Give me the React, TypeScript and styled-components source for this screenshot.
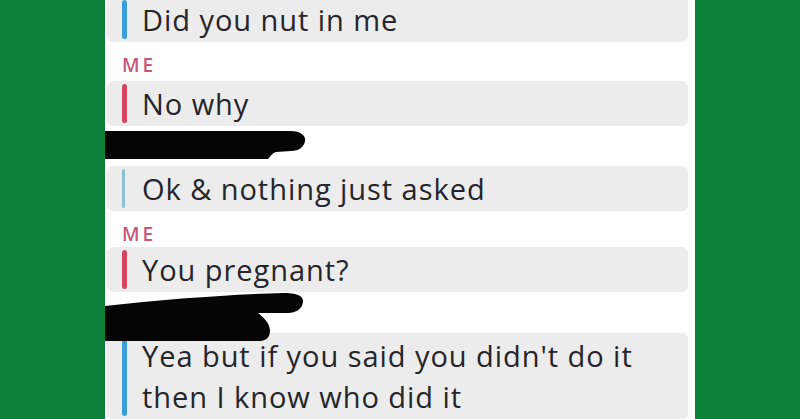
import styled, { createGlobalStyle } from "styled-components";

const GlobalStyle = createGlobalStyle`
  html, body {
    margin: 0;
    padding: 0;
    background: #0b8036;
  }
`;

interface Message {
  text: string[];
  bar: string;
  thin?: boolean;
}

const Page = styled.div`
  display: flex;
  height: 419px;
  overflow: hidden;
  background: #0b8036;
`;

const Side = styled.div<{ $w: number }>`
  width: ${(p) => p.$w}px;
  flex-shrink: 0;
`;

const Screen = styled.div`
  width: 590px;
  flex-shrink: 0;
  background: #ffffff;
  display: flex;
  flex-direction: column;
  padding: 0 7px 0 2px;
  box-sizing: border-box;
  margin-top: -3px;
  font-family: "Open Sans", "Noto Sans", sans-serif;
`;

const Bubble = styled.div`
  display: flex;
  align-items: stretch;
  background: #ececec;
  border-radius: 6px;
  padding: 2px 0 2px 15px;
`;

const Bar = styled.div<{ $color: string; $thin?: boolean }>`
  width: ${(p) => (p.$thin ? 3 : 5)}px;
  margin: 1px ${(p) => (p.$thin ? 17 : 15)}px 1px 0;
  border-radius: 3px;
  background: ${(p) => p.$color};
  flex-shrink: 0;
`;

const Text = styled.div`
  font-size: 29px;
  font-weight: 500;
  letter-spacing: 0.95px;
  line-height: 41px;
  color: #25252b;
  white-space: nowrap;
`;

const Label = styled.div<{ $h: number }>`
  height: ${(p) => p.$h}px;
  box-sizing: border-box;
  padding: 12px 0 0 15px;
  font-size: 19px;
  line-height: 23px;
  font-weight: 600;
  letter-spacing: 3px;
  color: #c4577a;
`;

const Redaction = styled.div<{ $h: number }>`
  height: ${(p) => p.$h}px;
  margin-left: -2px;
  position: relative;
  z-index: 1;
  svg {
    display: block;
    overflow: visible;
  }
`;

function RedactOne() {
  return (
    <Redaction $h={40}>
      <svg width="210" height="40" viewBox="0 0 210 40">
        <path
          d="M0 5 L186 5 C196 5 201 10 200 15 C199 21 194 25 186 25 L171 26 C167 27 165 31 163 33 L0 33 Z"
          fill="#050505"
        />
      </svg>
    </Redaction>
  );
}

function RedactTwo() {
  return (
    <Redaction $h={41}>
      <svg width="210" height="41" viewBox="0 0 210 41">
        <path
          d="M0 14 C60 7 130 2 178 1 C192 1 199 4 198 10 C197 17 191 21 183 21 L153 21 C159 26 164 30 165 38 C165 45 162 48 156 49 L0 49 Z"
          fill="#050505"
        />
      </svg>
    </Redaction>
  );
}

const messages: Message[] = [
  { text: ["Did you nut in me"], bar: "#3c9ed9" },
  { text: ["No why"], bar: "#d2475f" },
  { text: ["Ok & nothing just asked"], bar: "#8dc1d6", thin: true },
  { text: ["You pregnant?"], bar: "#d2475f" },
  {
    text: ["Yea but if you said you didn't do it", "then I know who did it"],
    bar: "#3c9ed9",
  },
];

function MessageBubble({ m }: { m: Message }) {
  return (
    <Bubble>
      <Bar $color={m.bar} $thin={m.thin} />
      <Text>
        {m.text.map((line, i) => (
          <div key={i}>{line}</div>
        ))}
      </Text>
    </Bubble>
  );
}

export default function App() {
  return (
    <>
      <GlobalStyle />
      <Page>
        <Side $w={105} />
        <Screen>
          <MessageBubble m={messages[0]} />
          <Label $h={40}>ME</Label>
          <MessageBubble m={messages[1]} />
          <RedactOne />
          <MessageBubble m={messages[2]} />
          <Label $h={36}>ME</Label>
          <MessageBubble m={messages[3]} />
          <RedactTwo />
          <MessageBubble m={messages[4]} />
        </Screen>
        <Side $w={105} />
      </Page>
    </>
  );
}
